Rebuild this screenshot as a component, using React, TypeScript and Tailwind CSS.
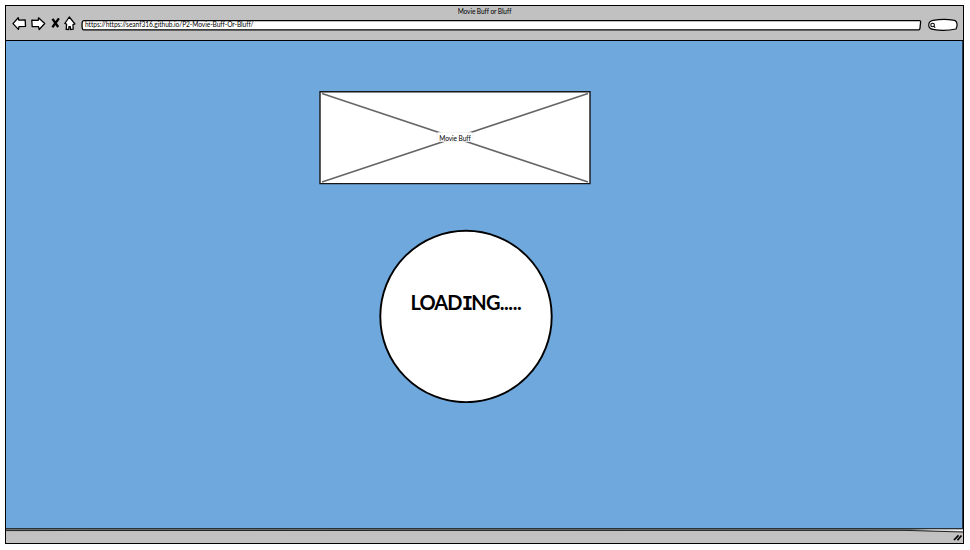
import React from 'react';

const sketch = "font-['Lato','Open_Sans',sans-serif]";

function BackIcon() {
  return (
    <svg className="h-[14px] w-[15px] shrink-0" viewBox="0 0 15 14" fill="white" stroke="black" strokeWidth="1.3" strokeLinejoin="round">
      <path d="M1 6.6 L6.2 .8 L6.9 3.2 L13.2 3 L13.5 9.4 L7 9.6 L6.4 12.4 Z" />
    </svg>
  );
}

function ForwardIcon() {
  return (
    <svg className="h-[14px] w-[15px] shrink-0" viewBox="0 0 15 14" fill="white" stroke="black" strokeWidth="1.3" strokeLinejoin="round">
      <path d="M.8 3.2 L7.2 3.3 L7.5 .8 L13.7 6.5 L8.2 12.5 L7.5 9.6 L1.2 9.7 Z" />
    </svg>
  );
}

function StopIcon() {
  return (
    <svg className="h-[14px] w-[9px] shrink-0" viewBox="0 0 9 14" fill="none" stroke="black" strokeWidth="2.3">
      <path d="M1.5 1.8 L7.2 10 M7.9 1.4 L1.4 10.2" />
    </svg>
  );
}

function HomeIcon() {
  return (
    <svg className="h-[16px] w-[12px] shrink-0" viewBox="0 0 12 16" fill="white" stroke="black" strokeWidth="1.3" strokeLinejoin="round">
      <path d="M5.3 1 L.8 7.5 L2.6 8.1 L2.2 13.4 L4.8 13.5 L4.9 10.7 L6.3 10.7 L6.6 13.5 L9.2 13.2 L9 8.7 L10.9 7.9 Z" />
    </svg>
  );
}

function Toolbar() {
  return (
    <header className="h-[35px] shrink-0 border-b border-black bg-[#c1c1c1]">
      <div className="h-[10px] text-center text-[6.6px] leading-[11px] text-black">
        <span className={`${sketch} inline-block tracking-[-0.1px]`}>Movie Buff or Bluff</span>
      </div>
      <nav className="flex h-[15px] items-center pl-[6px]">
        <BackIcon />
        <span className="w-[4px]" />
        <ForwardIcon />
        <span className="w-[5px]" />
        <StopIcon />
        <span className="w-[4px]" />
        <HomeIcon />
        <div className="relative ml-[5px] mt-[3px] h-[12px] w-[841px] shrink-0">
          <svg className="absolute inset-0 h-full w-full" viewBox="0 0 841 12" fill="white" stroke="black" strokeWidth="1.3">
            <path d="M3 1.6 H838 Q840 1.2 839.5 4 L839 9 Q838.8 11 837.5 10.8 H3 Q1 11 1.1 7 Q.7 1.4 3 1.6 Z" />
          </svg>
          <span className={`${sketch} relative block whitespace-nowrap pl-[4px] text-[6.6px] leading-[11px] tracking-[-0.045px] text-black`}>
            https://https://seanf316.github.io/P2-Movie-Buff-Or-Bluff/
          </span>
        </div>
        <svg className="ml-[6px] mt-[3px] h-[14px] w-[32px] shrink-0" viewBox="0 0 32 14" fill="white" stroke="black" strokeWidth="1.2">
          <path d="M5 2.4 Q16 .6 25 2.2 C30 2.4 29.5 8 28 11 Q16 13.6 5 11.4 C-.8 10.4 -.6 3.4 5 2.4 Z" />
          <circle cx="4.6" cy="7" r="1.8" strokeWidth="1.1" />
          <path d="M5.9 8.3 L7.2 9.7" />
        </svg>
      </nav>
    </header>
  );
}

function LogoPlaceholder() {
  return (
    <div className="relative ml-[313px] mt-[50px] h-[94px] w-[272px]">
      <svg className="absolute inset-0 h-full w-full" viewBox="0 0 272 94" fill="none">
        <path d="M1 .8 H271 V92.6 H1 Z" fill="white" stroke="#171717" strokeWidth="1.4" />
        <path d="M3 2.5 L269 91 M3 91 L269 2.5" stroke="#666" strokeWidth="1.6" />
        <rect x="118" y="41.5" width="36" height="9" rx="1.5" fill="white" stroke="#eee" strokeWidth=".7" />
      </svg>
      <div className="relative flex h-full items-center justify-center pb-[1px]">
        <span className={`${sketch} text-[6.6px] leading-[8px] tracking-[-0.1px] text-black`}>Movie Buff</span>
      </div>
    </div>
  );
}

function Loader() {
  return (
    <div className="ml-[373px] mt-[44px] h-[174px] w-[174px]">
      <svg className="block h-full w-full" viewBox="0 0 174 174" fill="white">
        <circle cx="87" cy="87.5" r="85.7" stroke="black" strokeWidth="1.9" />
      </svg>
      <div className="-mt-[113px] flex justify-center">
        <span className={`${sketch} whitespace-nowrap text-[20px] font-bold leading-[24px] text-black`}>
          <span className="tracking-[-0.9px]">LOAD</span>
          <span className="font-['DejaVu_Sans_Mono',monospace] text-[19px] tracking-[-1.8px]">I</span>
          <span className="tracking-[-0.8px]">NG</span>
          <span className="tracking-[-0.4px]">.....</span>
        </span>
      </div>
    </div>
  );
}

function StatusBar() {
  return (
    <footer className="h-[15px] shrink-0 bg-[#c1c1c1]">
      <svg className="block h-[15px] w-full" viewBox="0 0 957 15" fill="none">
        <path d="M0 .5 H957" stroke="#26333d" strokeWidth="1.3" />
        <path d="M0 1.6 H957" stroke="#666" strokeWidth="1" />
        <path d="M0 2.6 L60 2.5 L900 2.4 L957 4" stroke="#222" strokeWidth="1" />
        <path d="M905 1.5 H957 V3 Z" fill="white" />
        <path d="M948 12 L952.5 7.3 M951.5 12.2 L955.5 7.5" stroke="black" strokeWidth="1.7" />
      </svg>
    </footer>
  );
}

export default function App() {
  return (
    <div className="h-[550px] w-[970px] overflow-hidden bg-white pl-[5px] pt-[5px]">
      <div className="flex h-[539px] w-[959px] flex-col border border-black bg-[#6fa8dc]">
        <Toolbar />
        <main className="min-h-0 flex-1 border-r border-[#23384b]">
          <div className="flex flex-col">
            <LogoPlaceholder />
            <Loader />
          </div>
        </main>
        <StatusBar />
      </div>
    </div>
  );
}
